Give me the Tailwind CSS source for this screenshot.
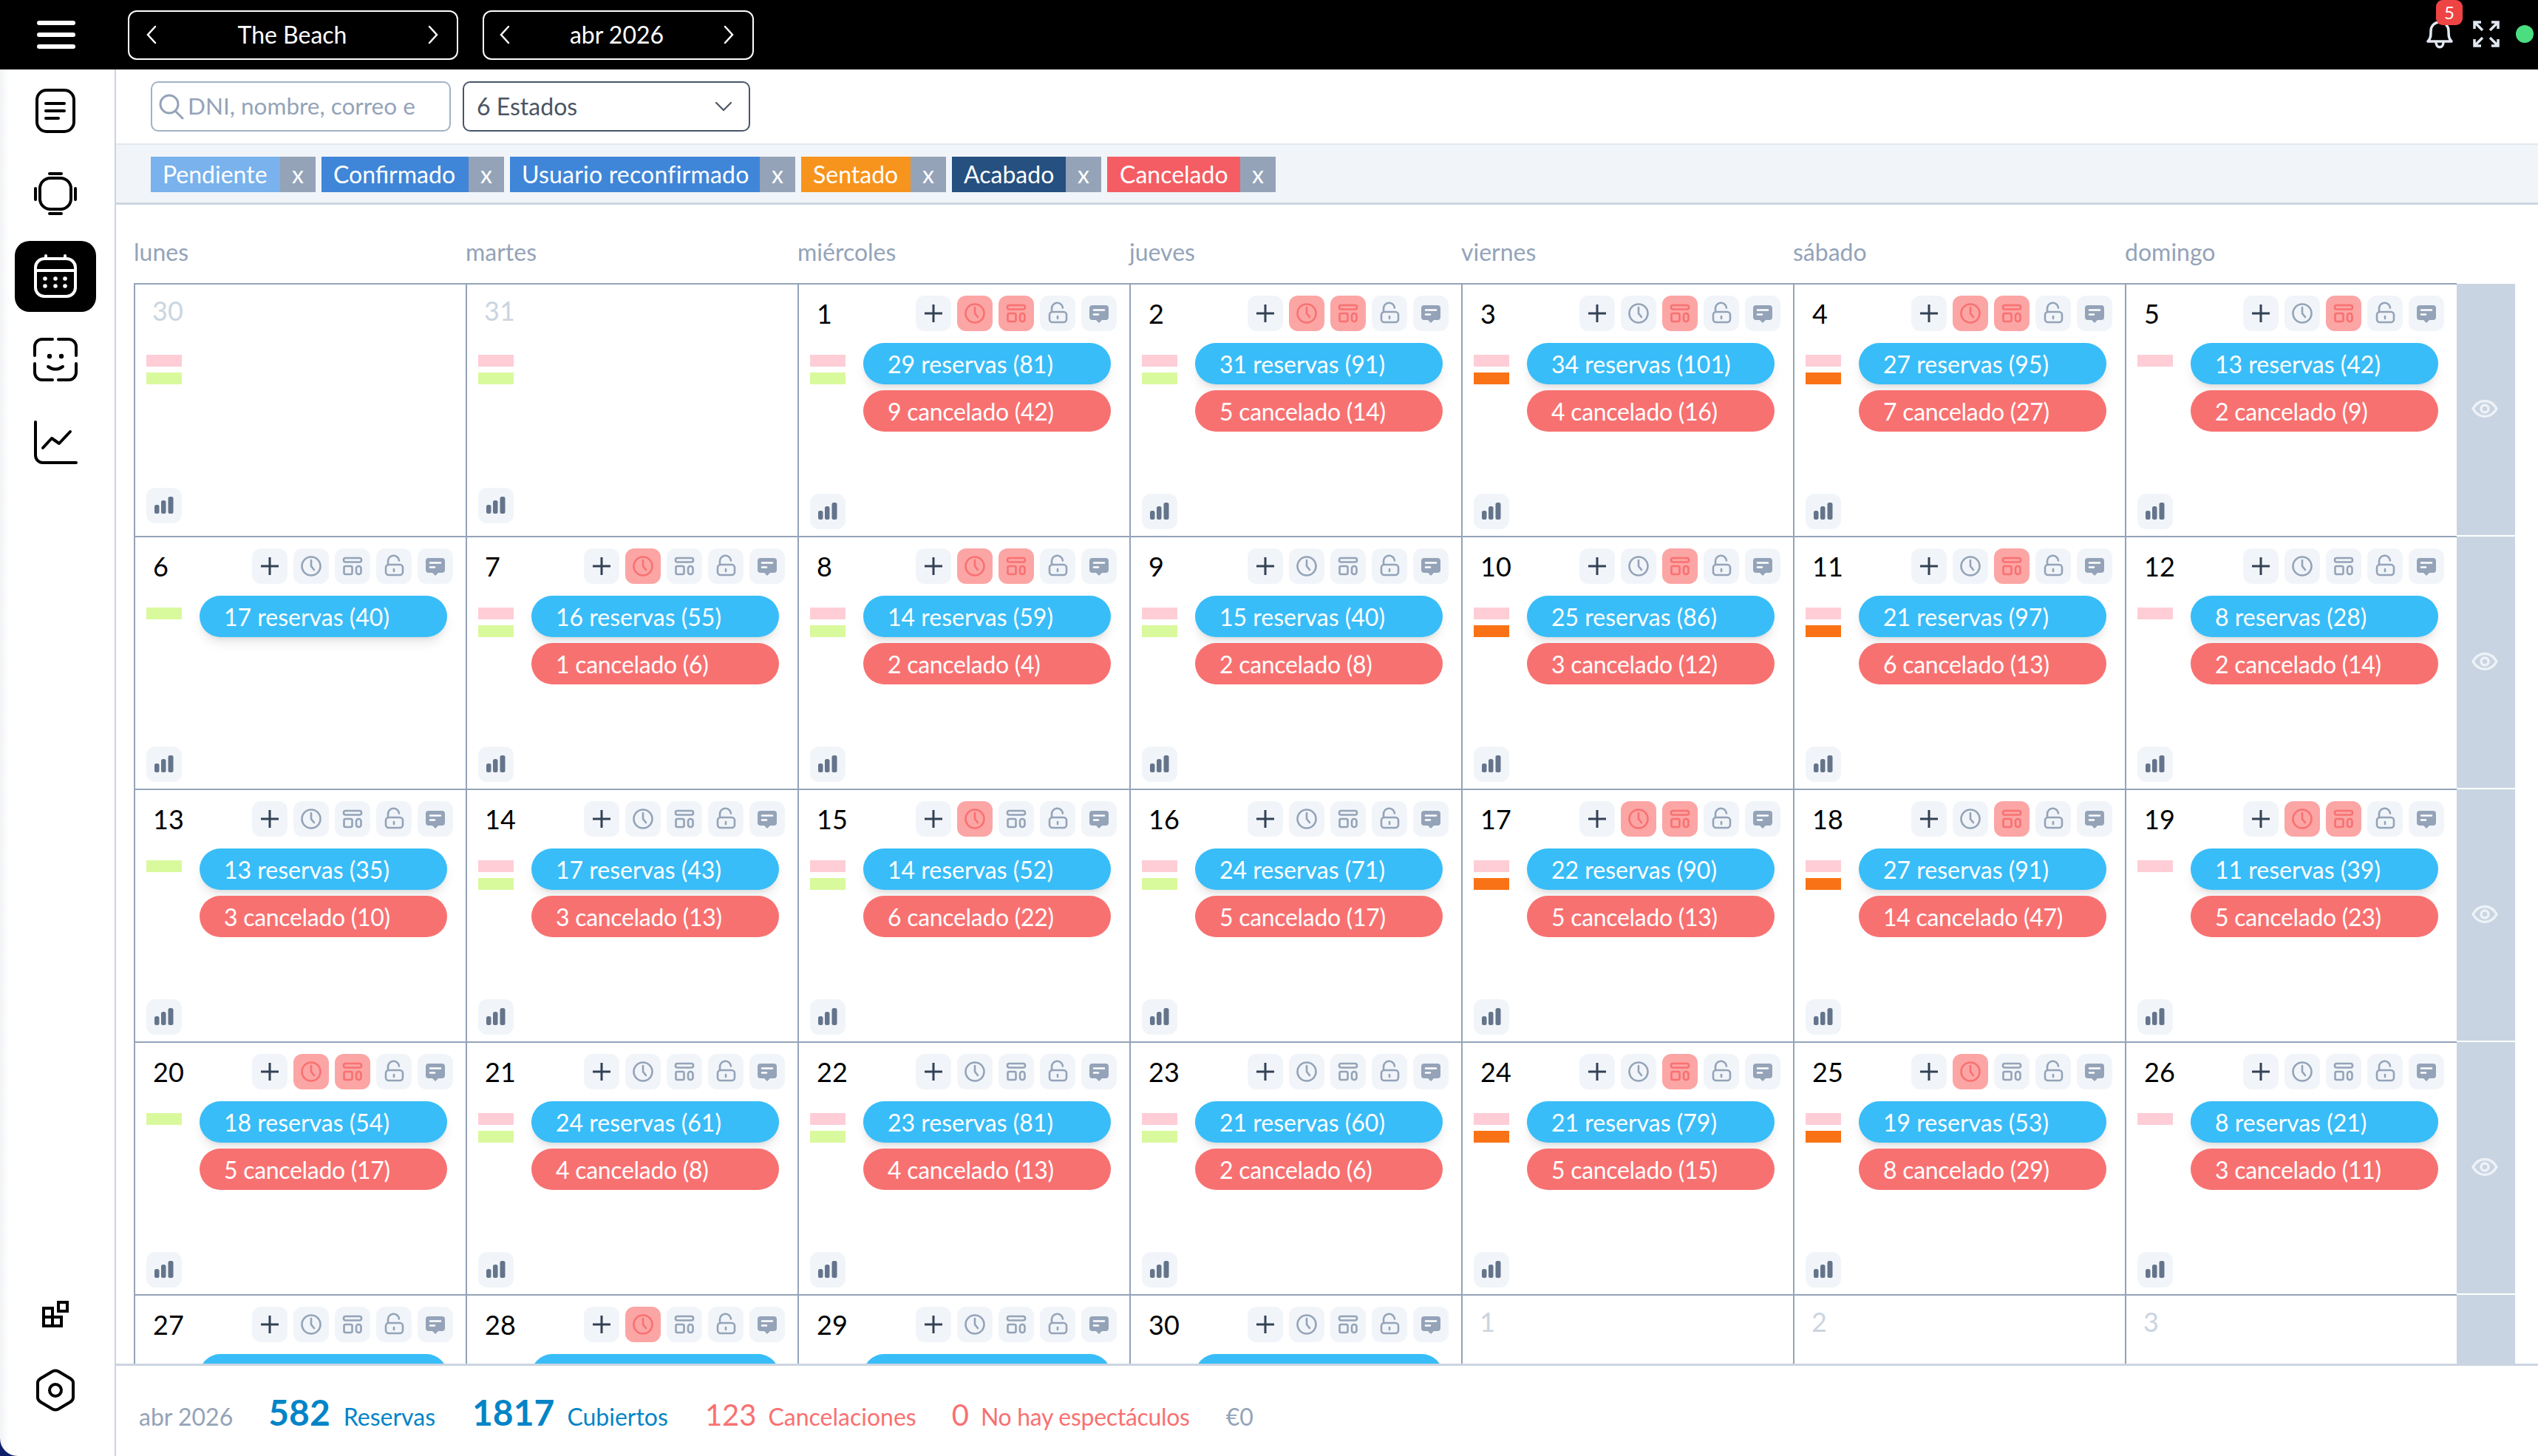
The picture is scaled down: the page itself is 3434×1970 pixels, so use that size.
<!DOCTYPE html>
<html lang="es">
<head>
<meta charset="UTF-8">
<title>Calendario</title>
<script src="https://cdn.jsdelivr.net/npm/@tailwindcss/browser@4"></script>
</head>
<body class="w-[3434px] h-[1970px] overflow-hidden flex flex-col bg-white font-['Lato','Liberation_Sans',sans-serif] text-[32px]">

<!-- top bar -->
<header class="h-[94px] shrink-0 bg-black flex items-center relative">
  <svg class="ml-[50px] w-[52px] h-[40px]" viewBox="0 0 52 40" fill="none" stroke="#fff" stroke-width="6" stroke-linecap="round"><path d="M3 4H49M3 20H49M3 36H49"/></svg>
  <div class="ml-[71px] w-[447px] h-[67px] border-2 border-white rounded-[12px] flex items-center justify-between pl-[22px] pr-[24px] text-white">
    <svg class="w-[16px] h-[28px]" viewBox="0 0 16 28" fill="none" stroke="#fff" stroke-width="2.5" stroke-linecap="round"><path d="M13 3L3 14L13 25"/></svg>
    <span>The Beach</span>
    <svg class="w-[16px] h-[28px]" viewBox="0 0 16 28" fill="none" stroke="#fff" stroke-width="2.5" stroke-linecap="round"><path d="M3 3L13 14L3 25"/></svg>
  </div>
  <div class="ml-[33px] w-[367px] h-[67px] border-2 border-white rounded-[12px] flex items-center justify-between pl-[20px] pr-[24px] text-white">
    <svg class="w-[16px] h-[28px]" viewBox="0 0 16 28" fill="none" stroke="#fff" stroke-width="2.5" stroke-linecap="round"><path d="M13 3L3 14L13 25"/></svg>
    <span>abr 2026</span>
    <svg class="w-[16px] h-[28px]" viewBox="0 0 16 28" fill="none" stroke="#fff" stroke-width="2.5" stroke-linecap="round"><path d="M3 3L13 14L3 25"/></svg>
  </div>
  <div class="ml-auto mr-[6px] flex items-center">
    <div class="relative w-[36px] h-[40px] mt-[-2px]">
      <svg class="w-[36px] h-[40px]" viewBox="0 0 36 40" fill="none" stroke="#e2e8f0" stroke-width="3.5" stroke-linecap="round" stroke-linejoin="round"><path d="M2 30H34C30 26 30 22 30 16C30 9 25 4 18 4C11 4 6 9 6 16C6 22 6 26 2 30Z"/><path d="M13 31C13 40 23 40 23 31"/></svg>
      <div class="absolute left-[13px] top-[-26px] w-[36px] h-[34px] rounded-[9px] bg-[#ef4444] text-white text-[24px] flex items-center justify-center">5</div>
    </div>
    <svg class="ml-[27px] w-[36px] h-[36px] mt-[-2px]" viewBox="0 0 36 36" fill="none" stroke="#e2e8f0" stroke-width="3.5"><path d="M2 11V2H11M2 2L13 13M25 2H34V11M34 2L23 13M2 25V34H11M2 34L13 23M25 34H34V25M34 34L23 23"/></svg>
    <div class="ml-[22px] w-[24px] h-[24px] rounded-full bg-[#4ade80] mt-[-2px]"></div>
  </div>
</header>

<div class="flex-1 flex min-h-0 bg-[#0f1f6b]">
  <!-- left nav -->
  <aside class="w-[157px] shrink-0 border-r-[2px] border-[#cbd5e1] flex flex-col items-center pr-[5px] rounded-bl-[24px] bg-linear-to-r from-[#f1f3f6] to-white to-[8%]">
    <div class="h-[112px] w-[110px] flex items-center justify-center">
      <svg class="w-[64px] h-[64px]" viewBox="0 0 64 64" fill="none" stroke="#000" stroke-width="4" stroke-linecap="round"><rect x="7" y="4" width="50" height="56" rx="13"/><path d="M19 22H44M19 32H44M19 42H36"/></svg>
    </div>
    <div class="h-[112px] w-[110px] flex items-center justify-center">
      <svg class="w-[64px] h-[64px]" viewBox="0 0 64 64" fill="none" stroke="#000" stroke-width="4" stroke-linecap="round"><rect x="11" y="11" width="42" height="42" rx="14"/><path d="M24 5H40M24 59H40"/><path d="M5 25V40M59 25V40"/></svg>
    </div>
    <div class="h-[96px] w-[110px] my-[8px] bg-black rounded-[20px] flex items-center justify-center">
      <svg class="w-[64px] h-[64px]" viewBox="0 0 64 64" fill="none" stroke="#fff" stroke-width="4" stroke-linecap="round"><rect x="5" y="8" width="54" height="51" rx="12"/><path d="M5 24H59M19 4V8M45 4V8"/><g fill="#fff" stroke="none"><circle cx="18" cy="35" r="2.8"/><circle cx="32" cy="35" r="2.8"/><circle cx="45" cy="35" r="2.8"/><circle cx="18" cy="45" r="2.8"/><circle cx="32" cy="45" r="2.8"/><circle cx="45" cy="45" r="2.8"/></g></svg>
    </div>
    <div class="h-[112px] w-[110px] flex items-center justify-center">
      <svg class="w-[64px] h-[64px]" viewBox="0 0 64 64" fill="none" stroke="#000" stroke-width="4" stroke-linecap="round"><path d="M4 27V15A10 10 0 0 1 14 5H28M36 5H50A10 10 0 0 1 60 15V27M60 38V50A10 10 0 0 1 50 60H36M28 60H14A10 10 0 0 1 4 50V38"/><path d="M22 42Q32 49 42 42"/><circle cx="24" cy="28" r="3.2" fill="#000" stroke="none"/><circle cx="40" cy="28" r="3.2" fill="#000" stroke="none"/></svg>
    </div>
    <div class="h-[112px] w-[110px] flex items-center justify-center">
      <svg class="w-[64px] h-[64px]" viewBox="0 0 64 64" fill="none" stroke="#000" stroke-width="4" stroke-linecap="round" stroke-linejoin="round"><path d="M5 5V50A10 10 0 0 0 15 60H60"/><path d="M15 40L27 27L37 34L52 18"/></svg>
    </div>
    <svg class="mt-auto mb-[56px] w-[36px] h-[36px]" viewBox="0 0 36 36" fill="none" stroke="#000" stroke-width="4"><path d="M2 10H14V34H2ZM2 22H26V34H14"/><rect x="22" y="2" width="12" height="12"/></svg>
    <svg class="mb-[60px] w-[52px] h-[58px]" viewBox="0 0 52 58" fill="none" stroke="#000" stroke-width="4" stroke-linejoin="round"><path d="M22 3.5Q26 1.5 30 3.5L46 13Q50 15.5 50 19V39Q50 42.5 46 45L30 54.5Q26 56.5 22 54.5L6 45Q2 42.5 2 39V19Q2 15.5 6 13Z"/><circle cx="26" cy="29" r="8"/></svg>
  </aside>

  <main class="flex-1 min-w-0 flex flex-col bg-white">
    <!-- search + estado -->
    <div class="h-[100px] shrink-0 flex items-start pt-[16px] pl-[47px] gap-[16px]">
      <div class="w-[406px] h-[68px] border-2 border-[#a3b1c4] rounded-[10px] flex items-center pl-[8px] overflow-hidden">
        <svg class="w-[36px] h-[36px] shrink-0" viewBox="0 0 36 36" fill="none" stroke="#94a3b8" stroke-width="3" stroke-linecap="round"><circle cx="15" cy="15" r="12"/><path d="M24 25L33 34"/></svg>
        <span class="ml-[4px] text-[31.5px] text-[#94a3b8] whitespace-nowrap">DNI, nombre, correo e</span>
      </div>
      <div class="w-[389px] h-[68px] border-2 border-[#475569] rounded-[10px] flex items-center justify-between pl-[17px] pr-[22px] text-[#4b5563]">
        <span>6 Estados</span>
        <svg class="w-[24px] h-[14px]" viewBox="0 0 24 14" fill="none" stroke="#4b5563" stroke-width="2.2" stroke-linecap="round"><path d="M2 2L12 12L22 2"/></svg>
      </div>
    </div>
    <!-- chips -->
    <div class="h-[83px] shrink-0 bg-[#f1f5f9] border-t-2 border-t-[#e2e8f0] border-b-[3px] border-b-[#cbd5e1] flex items-center pl-[47px] pt-[2px] gap-[8px] text-white">
      <div class="flex h-[48px]"><span class="w-[175px] pl-[16px] bg-[#79b2ec] leading-[48px]">Pendiente</span><span class="w-[48px] bg-[#94a3b8] text-center leading-[48px]">x</span></div>
      <div class="flex h-[48px]"><span class="w-[199px] pl-[16px] bg-[#3f86d8] leading-[48px]">Confirmado</span><span class="w-[48px] bg-[#94a3b8] text-center leading-[48px]">x</span></div>
      <div class="flex h-[48px]"><span class="w-[338px] pl-[16px] bg-[#3f86d8] leading-[48px] whitespace-nowrap tracking-[0.2px]">Usuario reconfirmado</span><span class="w-[48px] bg-[#94a3b8] text-center leading-[48px]">x</span></div>
      <div class="flex h-[48px]"><span class="w-[148px] pl-[16px] bg-[#f7941d] leading-[48px]">Sentado</span><span class="w-[48px] bg-[#94a3b8] text-center leading-[48px]">x</span></div>
      <div class="flex h-[48px]"><span class="w-[154px] pl-[16px] bg-[#255080] leading-[48px]">Acabado</span><span class="w-[48px] bg-[#94a3b8] text-center leading-[48px]">x</span></div>
      <div class="flex h-[48px]"><span class="w-[180px] pl-[17px] bg-[#f45d63] leading-[48px]">Cancelado</span><span class="w-[48px] bg-[#94a3b8] text-center leading-[48px]">x</span></div>
    </div>
    <!-- calendar -->
    <div class="flex-1 min-h-0 overflow-hidden pl-[24px]">
      <div class="h-[106px] grid grid-cols-[repeat(7,449px)] items-end pb-[18px] text-[#94a3b8]">
        <span>lunes</span><span>martes</span><span>miércoles</span><span>jueves</span><span>viernes</span><span>sábado</span><span>domingo</span>
      </div>
      <div id="weeks"></div>
    </div>
    <!-- totals -->
    <footer class="h-[125px] shrink-0 border-t-[3px] border-[#cbd5e1] flex items-baseline pl-[31px] pt-[35px] whitespace-nowrap">
      <span class="text-[#94a3b8]">abr 2026</span>
      <span class="ml-[48px] text-[48px] leading-[56px] font-bold text-[#0284c7]">582</span>
      <span class="ml-[18px] text-[#0284c7]">Reservas</span>
      <span class="ml-[50px] text-[48px] leading-[56px] font-bold text-[#0284c7]">1817</span>
      <span class="ml-[17px] text-[#0284c7]">Cubiertos</span>
      <span class="ml-[50px] text-[40px] leading-[56px] text-[#f87171]">123</span>
      <span class="ml-[16px] text-[#f87171]">Cancelaciones</span>
      <span class="ml-[48px] text-[40px] leading-[56px] text-[#f87171]">0</span>
      <span class="ml-[16px] tracking-[-0.3px] text-[#f87171]">No hay espectáculos</span>
      <span class="ml-[49px] text-[#94a3b8]">€0</span>
    </footer>
  </main>
</div>

<script>
  // day, reservas, cubiertos, cancelados, cubiertos cancelados, flags (c=clock, l=layout), bars
  const weeks = [
    [[30,0,0,0,0,'','pl',1],[31,0,0,0,0,'','pl',1],[1,29,81,9,42,'cl','pl'],[2,31,91,5,14,'cl','pl'],[3,34,101,4,16,'l','po'],[4,27,95,7,27,'cl','po'],[5,13,42,2,9,'l','p']],
    [[6,17,40,0,0,'','l'],[7,16,55,1,6,'c','pl'],[8,14,59,2,4,'cl','pl'],[9,15,40,2,8,'','pl'],[10,25,86,3,12,'l','po'],[11,21,97,6,13,'l','po'],[12,8,28,2,14,'','p']],
    [[13,13,35,3,10,'','l'],[14,17,43,3,13,'','pl'],[15,14,52,6,22,'c','pl'],[16,24,71,5,17,'','pl'],[17,22,90,5,13,'cl','po'],[18,27,91,14,47,'l','po'],[19,11,39,5,23,'cl','p']],
    [[20,18,54,5,17,'cl','l'],[21,24,61,4,8,'','pl'],[22,23,81,4,13,'','pl'],[23,21,60,2,6,'','pl'],[24,21,79,5,15,'l','po'],[25,19,53,8,29,'c','po'],[26,8,21,3,11,'','p']],
    [[27,1,1,0,0,'',''],[28,1,1,0,0,'c',''],[29,1,1,0,0,'',''],[30,1,1,0,0,'',''],[1,0,0,0,0,'','',1],[2,0,0,0,0,'','',1],[3,0,0,0,0,'','',1]]
  ];

  const plus = `<div class="w-[48px] h-[48px] rounded-[12px] bg-[#f1f5f9]"><svg class="w-[48px] h-[48px]" viewBox="0 0 48 48" fill="none" stroke="#334155" stroke-width="3"><path d="M12 24H36M24 12V36"/></svg></div>`;
  const lock = `<div class="w-[48px] h-[48px] rounded-[12px] bg-[#f1f5f9]"><svg class="w-[48px] h-[48px]" viewBox="0 0 48 48" fill="none" stroke="#94a3b8" stroke-width="2.6" stroke-linecap="round"><rect x="13" y="22" width="23" height="14" rx="4"/><path d="M16 22V18A7.5 7.5 0 0 1 31 16.5"/><path d="M24 28V31"/></svg></div>`;
  const note = `<div class="w-[48px] h-[48px] rounded-[12px] bg-[#f1f5f9]"><svg class="w-[48px] h-[48px]" viewBox="0 0 48 48"><path fill="#94a3b8" d="M15 13H33A4 4 0 0 1 37 17V29A4 4 0 0 1 33 33H28L24 37L20 33H15A4 4 0 0 1 11 29V17A4 4 0 0 1 15 13Z"/><path fill="none" stroke="#fff" stroke-width="2.6" stroke-linecap="round" d="M17 19.5H31M17 25.5H23"/></svg></div>`;
  const chart = `<div class="w-[48px] h-[48px] rounded-[12px] bg-[#f1f5f9] mt-auto"><svg class="w-[48px] h-[48px]" viewBox="0 0 48 48" fill="#64748b"><rect x="11" y="23" width="6.5" height="12" rx="2.5"/><rect x="20" y="17" width="6.5" height="18" rx="2.5"/><rect x="29.5" y="12" width="7" height="23" rx="2.5"/></svg></div>`;

  function clock(on) {
    const c = on ? '#f87171' : '#94a3b8';
    return `<div class="w-[48px] h-[48px] rounded-[12px] ${on ? 'bg-[#fca5a5]' : 'bg-[#f1f5f9]'}"><svg class="w-[48px] h-[48px]" viewBox="0 0 48 48" fill="none" stroke="${c}" stroke-width="2.6" stroke-linecap="round"><circle cx="24" cy="24" r="12.5"/><path d="M24 16V24L28 29"/></svg></div>`;
  }
  function layout(on) {
    const c = on ? '#f87171' : '#94a3b8';
    return `<div class="w-[48px] h-[48px] rounded-[12px] ${on ? 'bg-[#fca5a5]' : 'bg-[#f1f5f9]'}"><svg class="w-[48px] h-[48px]" viewBox="0 0 48 48" fill="none" stroke="${c}" stroke-width="2.6"><rect x="12" y="13" width="24" height="5.5" rx="2.5"/><rect x="12.5" y="24" width="11" height="11" rx="2"/><rect x="29" y="24" width="6.5" height="11" rx="3"/></svg></div>`;
  }
  function bars(b) {
    let s = '';
    if (b[0] === 'p') s += `<div class="h-[16px] bg-[#fecdd6]"></div>`;
    if (b.includes('l')) s += `<div class="h-[16px] bg-[#d9f99d]"></div>`;
    if (b.includes('o')) s += `<div class="h-[16px] bg-[#f97316]"></div>`;
    return s;
  }
  function cell(d) {
    const [day, res, cov, can, canCov, flags, b, muted] = d;
    const pill = 'h-[56px] rounded-full pl-[33px] leading-[58px] text-white whitespace-nowrap';
    if (muted) {
      return `<div class="h-[342px] border-l-2 border-t-2 border-[#94a3b8] pt-[15px] pl-[15px] pr-[15px] pb-[17px] flex flex-col">
        <div class="h-[48px] pl-[8px] text-[36px] leading-[40px] text-[#cbd5e1]">${day}</div>
        <div class="mt-[16px] w-[48px] pt-[16px] flex flex-col gap-[8px]">${bars(b)}</div>
        ${chart}</div>`;
    }
    return `<div class="h-[342px] border-l-2 border-t-2 border-[#94a3b8] pt-[15px] pl-[15px] pr-[15px] pb-[9px] flex flex-col">
      <div class="h-[48px] flex items-center justify-between pl-[9px] pr-[2px]">
        <span class="text-[36px] leading-none text-black">${day}</span>
        <div class="flex gap-[8px]">${plus}${clock(flags.includes('c'))}${layout(flags.includes('l'))}${lock}${note}</div>
      </div>
      <div class="mt-[16px] flex">
        <div class="w-[48px] pt-[16px] flex flex-col gap-[8px]">${bars(b)}</div>
        <div class="ml-[24px] w-[335px] flex flex-col gap-[8px]">
          <div class="${pill} bg-[#38bdf8] shadow-lg">${res > 1 ? `${res} reservas (${cov})` : ''}</div>
          ${can ? `<div class="${pill} tracking-[-0.3px] bg-[#f87171]">${can} cancelado (${canCov})</div>` : ''}
        </div>
      </div>
      ${chart}</div>`;
  }

  const eye = `<svg class="w-[36px] h-[28px]" viewBox="0 0 36 28" fill="none" stroke="#eef2f7" stroke-width="3.5"><path d="M2 14C10 0 26 0 34 14C26 28 10 28 2 14Z"/><circle cx="18" cy="14" r="5"/></svg>`;
  document.getElementById('weeks').innerHTML = weeks.map(w =>
    `<div class="grid grid-cols-[repeat(7,449px)_79px]">${w.map(cell).join('')}
      <div class="h-[342px] border-y border-white bg-[#c8d4e1] flex items-center justify-center pb-[2px] pr-[3px]">${eye}</div></div>`
  ).join('');
</script>
</body>
</html>
